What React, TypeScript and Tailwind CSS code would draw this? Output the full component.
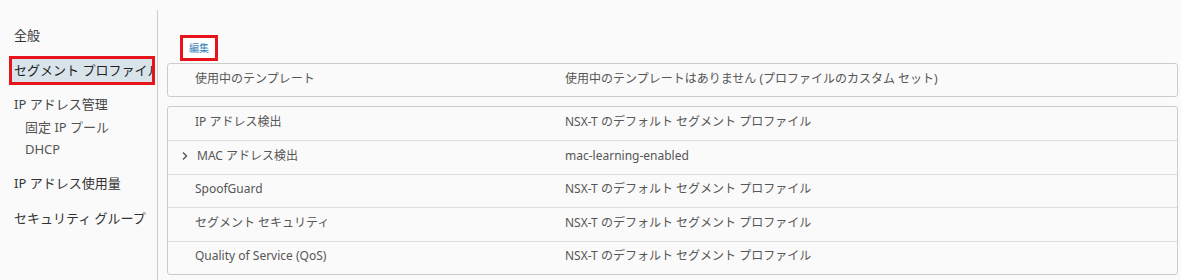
import React from "react";

const font = { fontFamily: '"Noto Sans", "Noto Sans CJK JP", sans-serif' };

const rows: { label: string; value: string; chevron?: boolean }[] = [
  { label: "IP アドレス検出", value: "NSX-T のデフォルト セグメント プロファイル" },
  { label: "MAC アドレス検出", value: "mac-learning-enabled", chevron: true },
  { label: "SpoofGuard", value: "NSX-T のデフォルト セグメント プロファイル" },
  { label: "セグメント セキュリティ", value: "NSX-T のデフォルト セグメント プロファイル" },
  { label: "Quality of Service (QoS)", value: "NSX-T のデフォルト セグメント プロファイル" },
];

export default function App() {
  return (
    <div className="w-[1181px] h-[280px] bg-[#fafafa] flex overflow-hidden" style={font}>
      <div className="w-[158px] shrink-0 pt-[10px] flex flex-col">
        <div className="flex-1 border-r border-[#cccccc] flex flex-col text-[13px] text-[#333333]">
          <div className="h-[46px] flex items-center pl-[14px] pt-[5px]">全般</div>
          <div className="ml-[9px] mr-[2px] h-[29px] border-[3px] border-[#e8141c] bg-[#d8e3ea] flex items-center pl-[2px] overflow-hidden whitespace-nowrap text-[#222]">
            セグメント プロファイル
          </div>
          <div className="h-[10px]" />
          <div className="h-[20px] flex items-center pl-[14px] text-[#444]">IP アドレス管理</div>
          <div className="h-[24px] flex items-center pl-[25px] pt-[2px] text-[#555]">固定 IP プール</div>
          <div className="h-[22px] flex items-center pl-[25px] text-[#555]">DHCP</div>
          <div className="h-[36px] flex items-center pl-[14px] pt-[10px] text-[#333]">IP アドレス使用量</div>
          <div className="h-[35px] flex items-center pl-[14px] pt-[8px] text-[#333]">セキュリティ グループ</div>
        </div>
      </div>
      <div className="flex-1 pl-[9px] pr-[3px] pt-[35px]">
        <div className="ml-[13px] w-[38px] h-[26px] border-[3px] border-[#e8141c] bg-white flex items-center justify-center text-[10px] text-[#3b82b8]">
          編集
        </div>
        <div className="mt-[2px] h-[34px] pb-[3px] border border-[#cccccc] rounded-[3px] bg-[#fafafa] flex items-center text-[12px] text-[#565656]">
          <div className="w-[397px] pl-[27px]">使用中のテンプレート</div>
          <div>使用中のテンプレートはありません (プロファイルのカスタム セット)</div>
        </div>
        <div className="mt-[9px] border border-[#cccccc] rounded-[3px] bg-[#fafafa] flex flex-col text-[12px] text-[#565656]">
          {rows.map((r, i) => (
            <div
              key={r.label}
              className={`h-[33.4px] pb-[3px] flex items-center ${i > 0 ? "border-t border-[#dddddd]" : ""}`}
            >
              <div className="w-[397px] flex items-center pl-[27px] relative">
                {r.chevron && (
                  <svg className="absolute left-[13px] top-1/2 -translate-y-1/2" width="8" height="10" viewBox="0 0 8 10">
                    <path d="M2 1.5 L5.5 5 L2 8.5" fill="none" stroke="#555" strokeWidth="1.4" />
                  </svg>
                )}
                <span className={r.chevron ? "pl-[2px]" : ""}>{r.label}</span>
              </div>
              <div>{r.value}</div>
            </div>
          ))}
        </div>
      </div>
    </div>
  );
}
